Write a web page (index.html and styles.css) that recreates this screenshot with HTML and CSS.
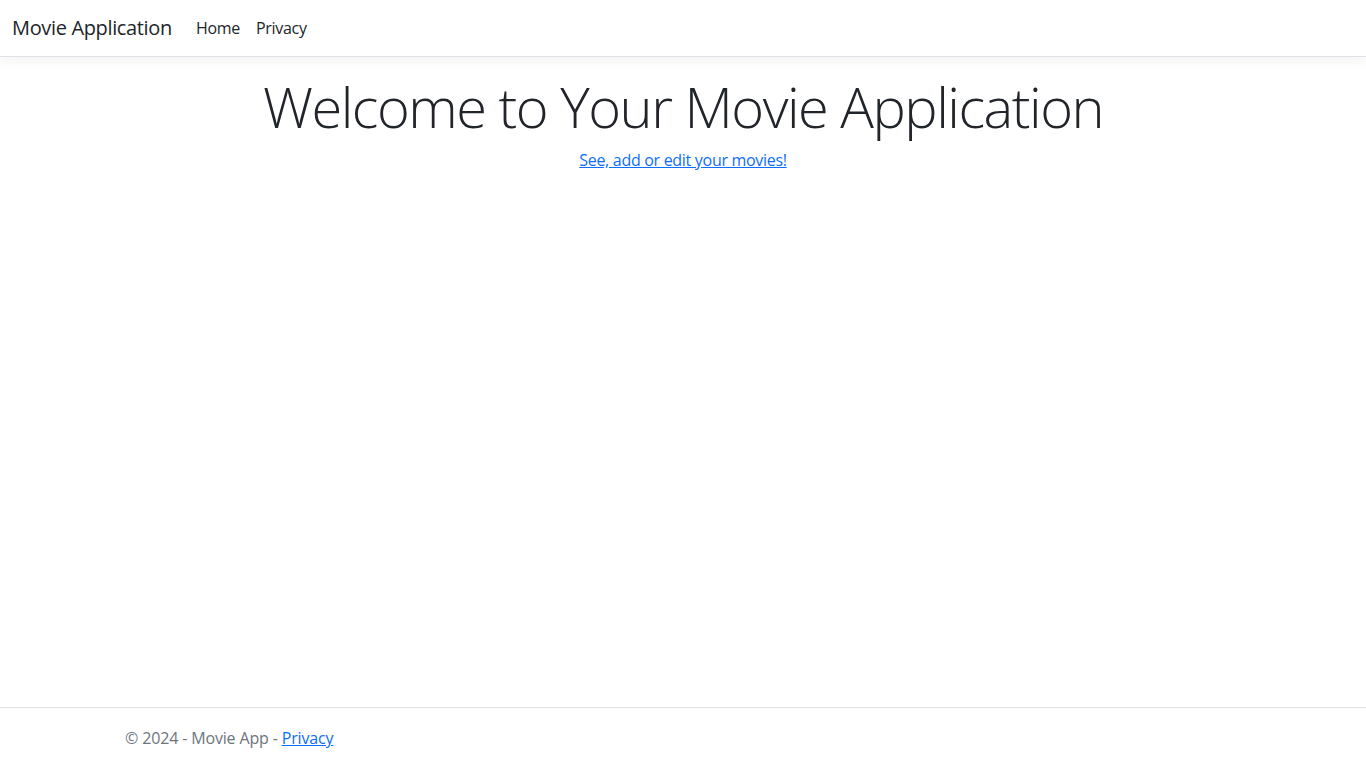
FILE: index.html
```html
<!DOCTYPE html>
<html lang="en">
<head>
<meta charset="utf-8">
<title>Home Page - Movie Application</title>
<link rel="stylesheet" href="styles.css">
</head>
<body>
<header>
  <nav class="navbar">
    <div class="navbar-inner">
      <a class="brand" href="#">Movie Application</a>
      <ul class="nav">
        <li><a class="nav-link" href="#">Home</a></li>
        <li><a class="nav-link" href="#">Privacy</a></li>
      </ul>
    </div>
  </nav>
</header>
<main class="container main">
  <div class="hero">
    <h1 class="display">Welcome to Your Movie Application</h1>
    <p class="hero-link"><a href="#">See, add or edit your movies!</a></p>
  </div>
</main>
<footer class="footer">
  <div class="container footer-inner">
    &copy; 2024 - Movie App - <a href="#">Privacy</a>
  </div>
</footer>
</body>
</html>
```

FILE: styles.css
```css
* { box-sizing: border-box; }
html, body { margin: 0; padding: 0; }
body {
  font-family: "Open Sans", "Noto Sans", "Liberation Sans", sans-serif;
  font-size: 16px;
  line-height: 1.5;
  letter-spacing: -0.3px;
  color: #212529;
  background: #fff;
  min-height: 100vh;
  display: flex;
  flex-direction: column;
}
a { color: #0d6efd; }
.navbar {
  padding: 8px 0;
  border-bottom: 1px solid #dee2e6;
  box-shadow: 0 4px 12px rgba(0,0,0,.05);
  background: #fff;
}
.navbar-inner {
  padding: 0 12px;
  display: flex;
  align-items: center;
}
.brand {
  font-size: 20px;
  line-height: 30px;
  padding: 5px 0;
  margin-right: 16px;
  letter-spacing: -0.35px;
  color: #212529;
  text-decoration: none;
}
.nav {
  list-style: none;
  margin: 0;
  padding: 0;
  display: flex;
}
.nav-link {
  display: block;
  padding: 8px;
  color: #212529;
  text-decoration: none;
}
.container {
  width: 1140px;
  margin: 0 auto;
  padding: 0 12px;
}
.main {
  margin-top: 16px;
  padding-bottom: 16px;
}
.hero { text-align: center; }
.display {
  font-size: 56px;
  font-weight: 300;
  line-height: 1.2;
  letter-spacing: -1.5px;
  margin: 0 0 8px;
}
.hero-link { margin: 0 0 16px; }
.footer {
  margin-top: auto;
  border-top: 1px solid #dee2e6;
  line-height: 60px;
  white-space: nowrap;
  color: #6c757d;
  letter-spacing: -0.15px;
}
```
